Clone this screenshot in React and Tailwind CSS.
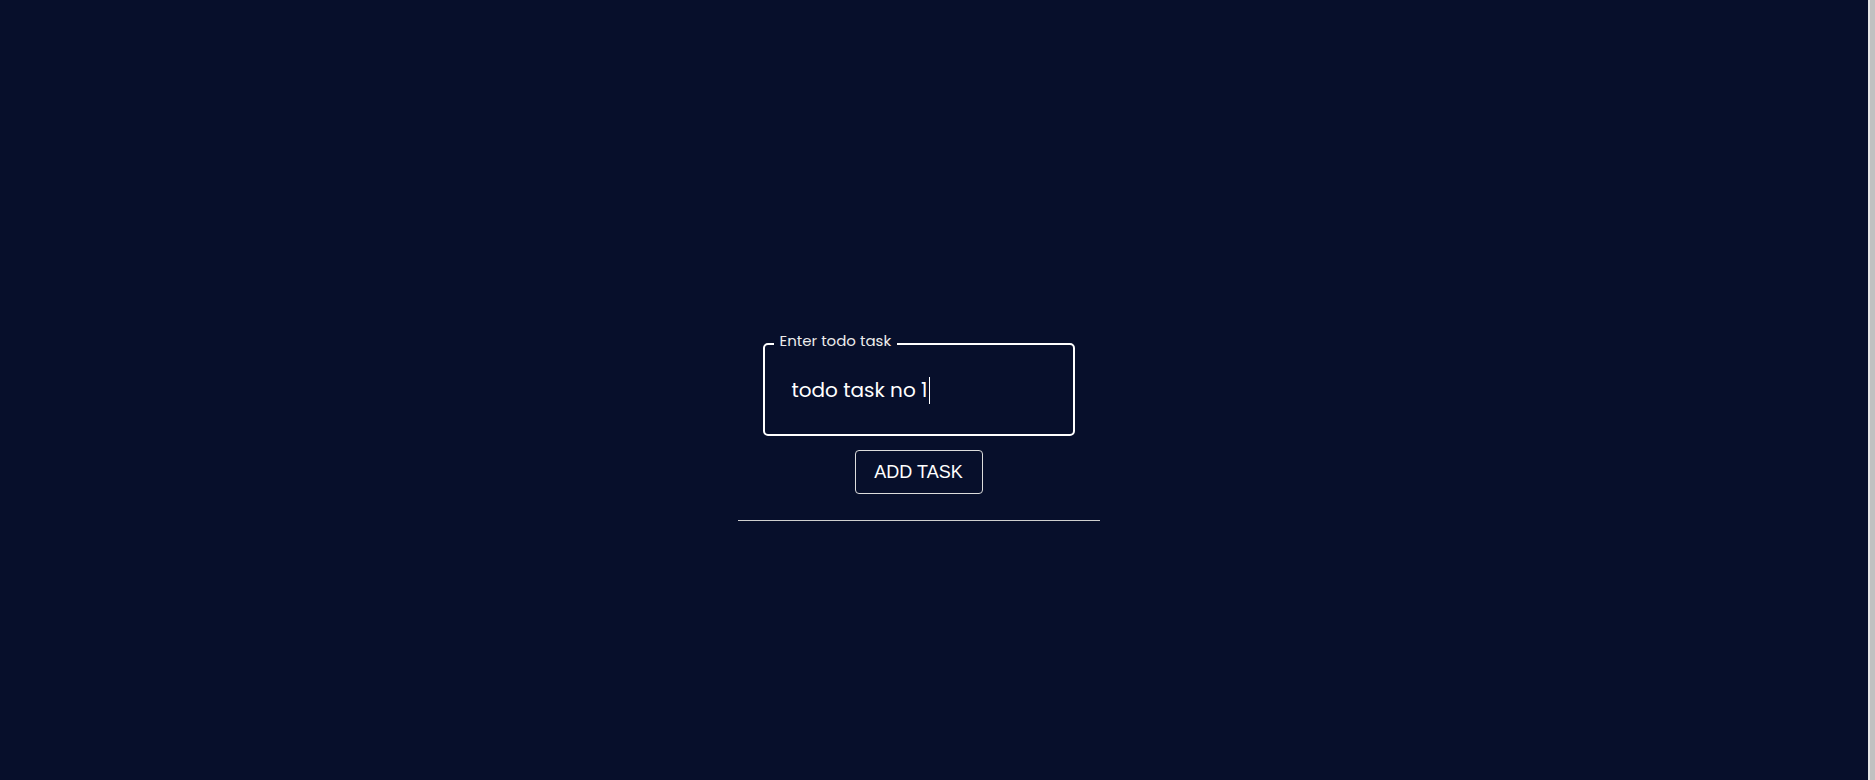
import React from "react";

const TodoPage = () => {
  return (
    <div className="flex h-[780px] w-full bg-[#070f2b]">
      {/* Main column */}
      <main className="flex w-[1837px] flex-col items-center pt-[332px]">
        {/* Task input */}
        <fieldset className="w-[312px] rounded-[5px] border-2 border-white px-[9px] pb-[30px] font-['Poppins','Lato',sans-serif]">
          <legend className="px-[6px] pb-[6px] text-[15px] leading-[18px] text-[#ececec]">
            Enter todo task
          </legend>
          <div className="mt-[20px] flex items-center pl-[18px] text-[20px] leading-[28px] text-white">
            <span>todo task no 1</span>
            <span className="ml-[2px] inline-block h-[27px] w-px bg-white" />
          </div>
        </fieldset>

        <button className="mt-[14px] h-[44px] w-[128px] rounded-[4px] border border-[#dcdcdc] font-['Liberation_Sans',Arial,sans-serif] text-[18px] text-white">
          ADD TASK
        </button>

        <div className="mt-[26px] h-px w-[362px] bg-[#cfcfcf]" />
      </main>

      <div className="flex-1" />

      {/* Scrollbar strip */}
      <div className="w-[2px] bg-[#e6e6e6]" />
      <div className="w-[5px] bg-[#c1c1c1]" />
    </div>
  );
};

export default function App() {
  return <TodoPage />;
}
